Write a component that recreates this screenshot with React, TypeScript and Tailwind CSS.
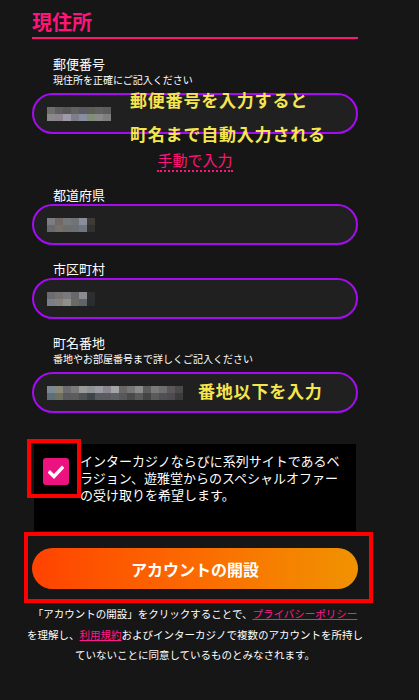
import React from "react";

interface MosaicProps {
  rows: string[][];
}

function Mosaic({ rows }: MosaicProps) {
  return (
    <div className="flex flex-col">
      {rows.map((row, i) => (
        <div key={i} className="flex">
          {row.map((c, j) => (
            <div key={j} className="w-[8px] h-[7px]" style={{ background: c }} />
          ))}
        </div>
      ))}
    </div>
  );
}

const zipMosaic = [
  ["#6e6e6e", "#5e5e60", "#575757", "#626262", "#5a5a64", "#5a5e56", "#606060", "#5c5c5c"],
  ["#8a8a8a", "#8d8490", "#a09aa8", "#7e7e8a", "#888ea0", "#828c78", "#8a8a8a", "#7f7f7f"],
];
const prefMosaic = [
  ["#7c7c82", "#6f6a66", "#76787a", "#6e7478", "#8a8e9a", "#3e3a36"],
  ["#6a6a6e", "#75706a", "#6c6e6a", "#6a7074", "#707680", "#333130"],
];
const cityMosaic = [
  ["#6c6c70", "#767272", "#7a7a7c", "#68686c", "#8a8a90", "#2e2e30"],
  ["#7a7e86", "#86807c", "#8e908a", "#6c6a66", "#5e646a", "#2c2c2e"],
];
const addrMosaic = [
  ["#7b8a92", "#8a8a78", "#6c6c70", "#7a7a7a", "#9a9a9a", "#8c9296", "#9a9aa2", "#8c8690", "#a4a4a8", "#6a6666", "#767676", "#8c8c8c", "#5c5c5c", "#7a7a7a", "#6e6e6e", "#5a585a", "#4a4a4a"],
  ["#5e6e74", "#6e7060", "#5a5a5e", "#5c5c5c", "#4e5254", "#3e4448", "#565c60", "#5a5a60", "#5e6064", "#56585a", "#4a4a4c", "#5a5a5a", "#444446", "#5a5a5a", "#505052", "#4e4a50", "#3c3a3c"],
];

function Field({
  label,
  sub,
  mosaic,
}: {
  label: string;
  sub?: string;
  mosaic: string[][];
}) {
  return (
    <div className="flex flex-col">
      <div className="pl-[21px] text-white text-[13px] leading-[16px]">{label}</div>
      {sub && (
        <div className="pl-[21px] text-white text-[10px] leading-[13px] mt-px">{sub}</div>
      )}
      <div
        className={`h-[41px] rounded-full border-2 border-[#a60cf2] bg-[#202020] flex items-center pl-[13px] ${
          sub ? "mt-[7px]" : "mt-px"
        }`}
      >
        <Mosaic rows={mosaic} />
      </div>
    </div>
  );
}

export default function App() {
  return (
    <div
      className="relative w-[419px] h-[700px] overflow-hidden bg-[#161616]"
      style={{ fontFamily: '"Noto Sans CJK JP", "Noto Sans", sans-serif' }}
    >
      <div className="ml-[32px] w-[326px] flex flex-col">
        {/* section title */}
        <div className="pt-[9px] pb-[2px] border-b-2 border-[#ff1478]">
          <h2 className="text-[20px] leading-[26px] font-bold text-[#ff1478]">現住所</h2>
        </div>

        <div className="mt-[17px]">
          <Field label="郵便番号" sub="現住所を正確にご記入ください" mosaic={zipMosaic} />
        </div>

        <div className="flex justify-center mt-[16px]">
          <span className="text-[15px] leading-[20px] text-[#ff1478] border-b-2 border-dotted border-[#ff1478]">
            手動で入力
          </span>
        </div>

        <div className="mt-[15px]">
          <Field label="都道府県" mosaic={prefMosaic} />
        </div>
        <div className="mt-[16px]">
          <Field label="市区町村" mosaic={cityMosaic} />
        </div>
        <div className="mt-[16px]">
          <Field
            label="町名番地"
            sub="番地やお部屋番号まで詳しくご記入ください"
            mosaic={addrMosaic}
          />
        </div>

        {/* opt-in */}
        <div className="mt-[31px] mx-[2px] bg-black flex items-start pl-[9px] pt-[8px] pb-[28px]">
          <div className="mt-[6px] w-[26px] h-[27px] rounded-[3px] bg-[#ec1380] flex items-center justify-center shrink-0">
            <svg width="16" height="14" viewBox="0 0 16 14">
              <path d="M2 7.5 L6 11.5 L14 3" stroke="white" strokeWidth="3.4" fill="none" strokeLinecap="square" />
            </svg>
          </div>
          <p className="ml-[11px] text-white text-[13px] leading-[17px]">
            インターカジノならびに系列サイトであるベ
            <br />
            ラジョン、遊雅堂からのスペシャルオファー
            <br />
            の受け取りを希望します。
          </p>
        </div>

        <button className="mt-[17px] h-[41px] rounded-full text-white text-[16px] font-bold bg-gradient-to-r from-[#ff4200] via-[#fb6a00] to-[#f09200]">
          アカウントの開設
        </button>

        <p className="mt-[15px] -mx-[12px] text-center whitespace-nowrap text-white text-[10.5px] leading-[20.5px]">
          「アカウントの開設」をクリックすることで、
          <span className="text-[#ff1a8c] underline">プライバシーポリシー</span>
          <br />
          を理解し、<span className="text-[#ff1a8c] underline">利用規約</span>
          およびインターカジノで複数のアカウントを所持し
          <br />
          ていないことに同意しているものとみなされます。
        </p>
      </div>

      {/* annotations */}
      <div className="absolute left-[130px] top-[88px] text-[17px] leading-[24px] font-bold tracking-[0.8px] text-[#f5e64e]">
        郵便番号を入力すると
      </div>
      <div className="absolute left-[130px] top-[122px] text-[17px] leading-[24px] font-bold tracking-[0.8px] text-[#f5e64e]">
        町名まで自動入力される
      </div>
      <div className="absolute left-[198px] top-[379px] text-[17px] leading-[24px] font-bold tracking-[0.8px] text-[#f5e64e]">
        番地以下を入力
      </div>
      <div className="absolute left-[27px] top-[439px] w-[54px] h-[59px] border-4 border-[#ff0000]" />
      <div className="absolute left-[24px] top-[532px] w-[349px] h-[71px] border-4 border-[#ff0000]" />
    </div>
  );
}
